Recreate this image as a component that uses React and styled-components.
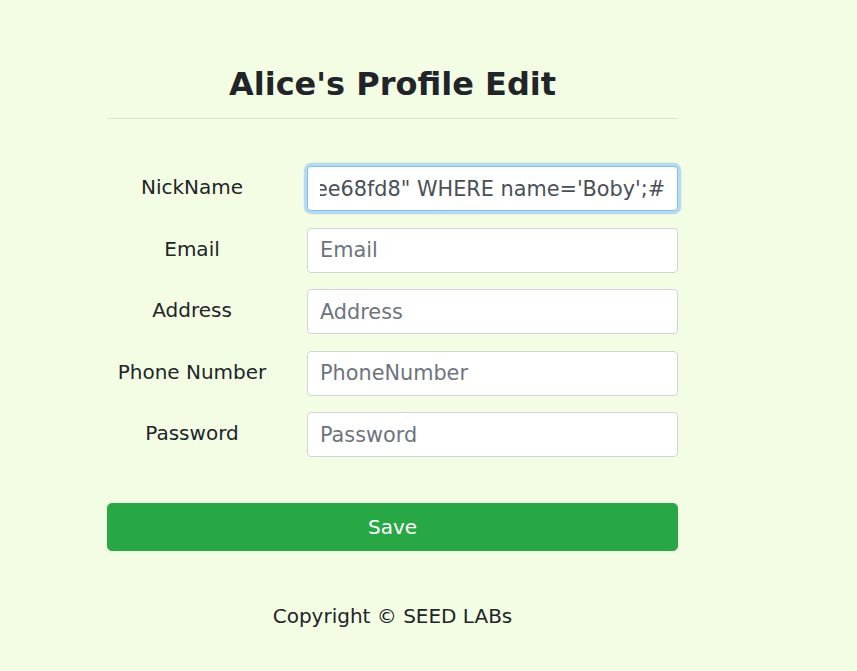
import React, { useEffect, useRef } from "react";
import styled, { createGlobalStyle, css } from "styled-components";

const GlobalStyle = createGlobalStyle`
  html, body {
    margin: 0;
    padding: 0;
    background: #f3fde4;
  }
  body {
    font-family: "DejaVu Sans", Verdana, sans-serif;
    color: #212529;
    font-size: 20px;
  }
  * { box-sizing: border-box; }
`;

const Page = styled.div`
  padding-top: 65px;
  padding-bottom: 40px;
`;

const Container = styled.main`
  width: 571px;
  margin-left: 107px;
  display: flex;
  flex-direction: column;
`;

const Title = styled.h2`
  margin: 0;
  font-size: 32px;
  line-height: 1.2;
  font-weight: 700;
  text-align: center;
  color: #212529;
`;

const Rule = styled.hr`
  margin: 15px 0 0;
  border: 0;
  border-top: 1px solid rgba(0, 0, 0, 0.1);
`;

const Form = styled.form`
  margin-top: 47px;
  display: grid;
  grid-template-columns: 170px 371px;
  column-gap: 30px;
  row-gap: 16.5px;
  align-items: center;
`;

const Label = styled.label`
  padding-bottom: 3px;
  font-size: 20px;
  line-height: 1.5;
  text-align: center;
  color: #212529;
`;

const Input = styled.input`
  display: block;
  width: 100%;
  height: 45px;
  padding: 6px 12px;
  font-family: "DejaVu Sans", Verdana, sans-serif;
  font-size: 20.8px;
  line-height: 1.5;
  color: #495057;
  background: #fff;
  border: 1px solid #ced4da;
  border-radius: 4px;
  outline: none;
  &::placeholder {
    color: #6c757d;
    opacity: 1;
  }
  ${(p) =>
    p.$focused &&
    css`
      border-color: #80bdff;
      box-shadow: 0 0 0 3.2px rgba(0, 123, 255, 0.25);
    `}
`;

const SaveButton = styled.button`
  margin-top: 46px;
  width: 100%;
  height: 48px;
  padding: 8px 16px;
  font-family: "DejaVu Sans", Verdana, sans-serif;
  font-size: 20px;
  line-height: 1.5;
  color: #fff;
  background: #28a745;
  border: 1px solid #28a745;
  border-radius: 4.8px;
  cursor: pointer;
`;

const Footer = styled.footer`
  margin-top: 50px;
  text-align: center;
  font-size: 20px;
  line-height: 1.5;
  color: #212529;
`;

const fields = [
  { label: "Email", placeholder: "Email" },
  { label: "Address", placeholder: "Address" },
  { label: "Phone Number", placeholder: "PhoneNumber" },
  { label: "Password", placeholder: "Password", type: "password" },
];

export default function App() {
  const nickRef = useRef(null);
  useEffect(() => {
    const el = nickRef.current;
    if (el) el.scrollLeft = el.scrollWidth;
  }, []);

  return (
    <Page>
      <GlobalStyle />
      <Container>
        <Title>Alice's Profile Edit</Title>
        <Rule />
        <Form onSubmit={(e) => e.preventDefault()}>
          <Label htmlFor="nick">NickName</Label>
          <Input
            id="nick"
            ref={nickRef}
            $focused
            defaultValue={`Boby', password="5baa61e4c9b93f3f0682250b6cf8331b7ee68fd8" WHERE name='Boby';#`}
          />
          {fields.map((f) => (
            <React.Fragment key={f.label}>
              <Label>{f.label}</Label>
              <Input type={f.type || "text"} placeholder={f.placeholder} />
            </React.Fragment>
          ))}
        </Form>
        <SaveButton type="button">Save</SaveButton>
        <Footer>Copyright © SEED LABs</Footer>
      </Container>
    </Page>
  );
}
